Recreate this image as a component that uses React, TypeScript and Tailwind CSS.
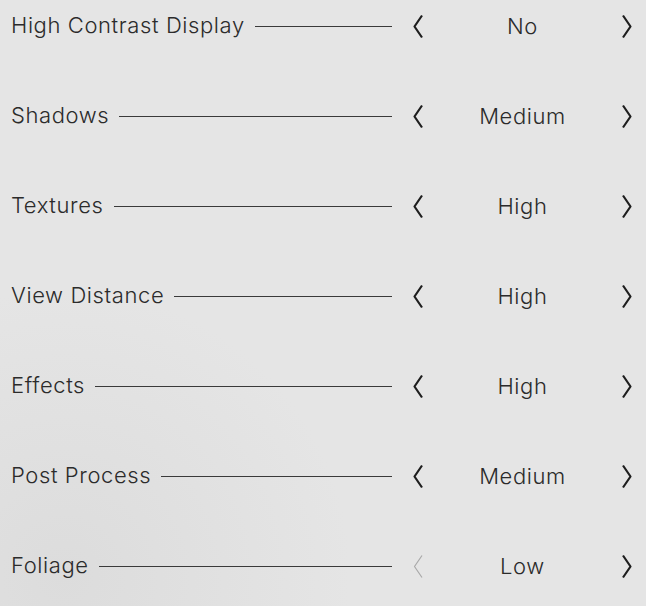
const rows = [
  { label: "High Contrast Display", value: "No", canPrev: true },
  { label: "Shadows", value: "Medium", canPrev: true },
  { label: "Textures", value: "High", canPrev: true },
  { label: "View Distance", value: "High", canPrev: true },
  { label: "Effects", value: "High", canPrev: true },
  { label: "Post Process", value: "Medium", canPrev: true },
  { label: "Foliage", value: "Low", canPrev: false },
];

function Chevron({ dir, dim = false }: { dir: "left" | "right"; dim?: boolean }) {
  return (
    <svg width="12" height="25" viewBox="0 0 12 25" className={`shrink-0 ${dim ? "text-[#a9a9a9]" : "text-[#1e1e1e]"}`}>
      <polyline
        points={dir === "left" ? "10,1.5 2.5,12.5 10,23.5" : "2,1.5 9.5,12.5 2,23.5"}
        fill="none"
        stroke="currentColor"
        strokeWidth={dim ? 1.2 : 2.2}
        strokeLinejoin="round"
      />
    </svg>
  );
}

export default function App() {
  return (
    <div className="min-h-[606px] w-full bg-[#e5e5e5] bg-[radial-gradient(circle_at_10%_95%,#dcdcdc_0%,#e5e5e5_35%)] font-['Inter',sans-serif] font-light text-[#2b2b2b]">
      <div className="flex flex-col gap-[38px] pl-[11px]">
        {rows.map((row) => (
          <div key={row.label} className="flex h-[52px] items-center">
            <span className="-mt-[2px] text-[22px] leading-none tracking-[0.6px]">{row.label}</span>
            <div className="ml-[10px] h-px flex-1 bg-[#3a3a3a]" />
            <div className="flex w-[254px] items-center pl-[20px] pr-[13px]">
              <Chevron dir="left" dim={!row.canPrev} />
              <span className="-mt-[1px] flex-1 text-center text-[22px] leading-none tracking-[0.6px]">{row.value}</span>
              <Chevron dir="right" />
            </div>
          </div>
        ))}
      </div>
    </div>
  );
}
